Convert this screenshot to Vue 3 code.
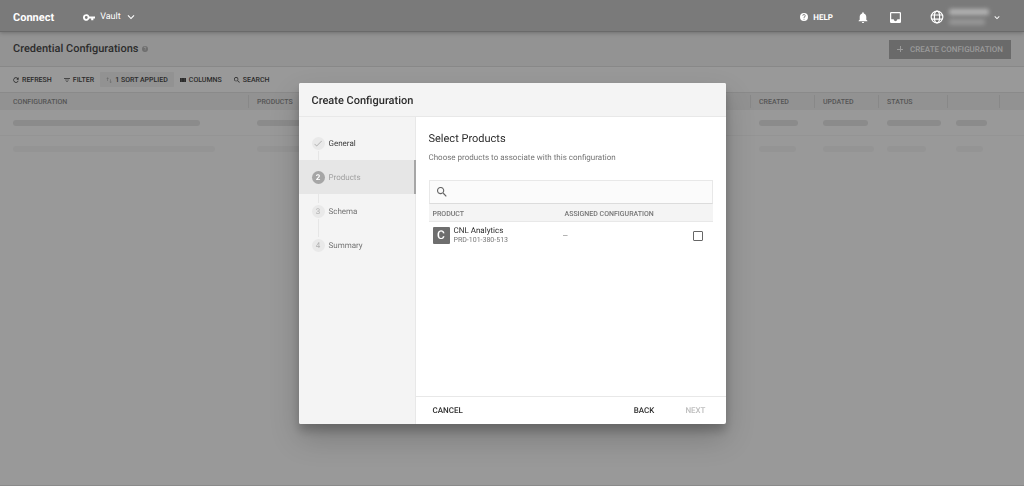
<template>
  <div class="page">
    <header class="topbar">
      <a href="#" class="brand">Connect</a>
      <button class="module">
        <svg class="key" viewBox="1 6 22 12"><path d="M12.65 10A6 6 0 1 0 12.65 14H16v3h4v-3h3v-4H12.65zM7 14.6a2.6 2.6 0 1 1 0-5.2 2.6 2.6 0 0 1 0 5.2z" /></svg>
        <span>Vault</span>
        <svg class="chevron" viewBox="5 7 14 10"><path d="M7.4 8.6 12 13.2l4.6-4.6L18 10l-6 6-6-6z" /></svg>
      </button>
      <nav class="actions">
        <button class="help">
          <svg viewBox="2 2 20 20"><path :d="helpIcon" /></svg>
          <span>HELP</span>
        </button>
        <button class="bell" aria-label="Notifications">
          <svg viewBox="2 2 20 20"><path d="M12 22c1.1 0 2-.9 2-2h-4c0 1.1.9 2 2 2zm6-6v-5c0-3.07-1.63-5.64-4.5-6.32V4a1.5 1.5 0 0 0-3 0v.68C7.64 5.36 6 7.92 6 11v5l-2 2v1h16v-1z" /></svg>
        </button>
        <button class="inbox" aria-label="Inbox">
          <svg viewBox="3 3 18 18"><path d="M19 3H5a2 2 0 0 0-2 2v14a2 2 0 0 0 2 2h14a2 2 0 0 0 2-2V5a2 2 0 0 0-2-2zm0 12h-4a3 3 0 0 1-6 0H5V5h14z" /></svg>
        </button>
        <button class="account" aria-label="Account">
          <svg class="globe" viewBox="0 0 24 24">
            <circle cx="12" cy="12" r="10" />
            <ellipse cx="12" cy="12" rx="4.5" ry="10" />
            <path d="M2.8 8.5h18.4M2.8 15.5h18.4" />
          </svg>
          <span class="user">
            <i class="user-name"></i>
            <i class="user-id"></i>
          </span>
          <svg class="chevron-small" viewBox="5 7 14 10"><path d="M7.4 8.6 12 13.2l4.6-4.6L18 10l-6 6-6-6z" /></svg>
        </button>
      </nav>
    </header>

    <section class="titlebar">
      <h1>Credential Configurations</h1>
      <svg class="hint" viewBox="2 2 20 20"><path :d="helpIcon" /></svg>
      <button class="create"><span class="plus"></span>CREATE CONFIGURATION</button>
    </section>

    <div class="toolbar">
      <button v-for="tool in tools" :key="tool.label" :class="{ applied: tool.applied }">
        <svg viewBox="3 3 18 18"><path :d="tool.icon" /></svg>
        <span>{{ tool.label }}</span>
      </button>
    </div>

    <table class="grid">
      <colgroup>
        <col v-for="col in columns" :key="col.key" :class="'col-' + col.key">
      </colgroup>
      <thead>
        <tr>
          <th v-for="col in columns" :key="col.key"><span>{{ col.label }}</span></th>
        </tr>
      </thead>
      <tbody>
        <tr v-for="(row, i) in placeholders" :key="i" :class="{ faded: i > 0 }">
          <td v-for="(size, j) in row" :key="j">
            <div v-if="size" class="bar" :style="{ width: size + 'px' }"></div>
          </td>
        </tr>
      </tbody>
    </table>

    <div class="overlay">
      <div class="dialog" role="dialog" aria-labelledby="dialog-title">
        <div class="dialog-head">
          <h2 id="dialog-title">Create Configuration</h2>
        </div>
        <div class="dialog-body">
          <ol class="steps">
            <li v-for="(step, i) in steps" :key="step" :class="{ done: i + 1 < current, active: i + 1 === current }">
              <span class="bullet">
                <svg v-if="i + 1 < current" viewBox="3 4 18 16"><path d="M9 16.6 4.8 12.4l-1.2 1.2L9 19 21 7l-1.2-1.2z" /></svg>
                <template v-else>{{ i + 1 }}</template>
              </span>
              <span>{{ step }}</span>
            </li>
          </ol>
          <div class="main">
            <div class="content">
              <h3>Select Products</h3>
              <p>Choose products to associate with this configuration</p>
              <label class="search">
                <svg viewBox="3 3 18 18"><path :d="searchIcon" /></svg>
                <input v-model="query" type="text" aria-label="Search products">
              </label>
              <table class="products">
                <thead>
                  <tr>
                    <th class="name-col">PRODUCT</th>
                    <th>ASSIGNED CONFIGURATION</th>
                    <th class="check-col"></th>
                  </tr>
                </thead>
                <tbody>
                  <tr v-for="product in products" :key="product.id">
                    <td>
                      <div class="product">
                        <span class="avatar">{{ product.name[0] }}</span>
                        <div>
                          <div class="product-name">{{ product.name }}</div>
                          <div class="product-id">{{ product.id }}</div>
                        </div>
                      </div>
                    </td>
                    <td class="assigned">{{ product.assigned }}</td>
                    <td><input v-model="product.selected" type="checkbox" :aria-label="product.name"></td>
                  </tr>
                </tbody>
              </table>
            </div>
            <div class="dialog-foot">
              <button>CANCEL</button>
              <button class="back">BACK</button>
              <button disabled>NEXT</button>
            </div>
          </div>
        </div>
      </div>
    </div>
  </div>
</template>

<script setup>
import { ref } from 'vue';

const helpIcon = 'M12 2a10 10 0 1 0 0 20 10 10 0 0 0 0-20zm1 17h-2v-2h2zm2.07-7.75-.9.92C13.45 12.9 13 13.5 13 15h-2v-.5c0-1.1.45-2.1 1.17-2.83l1.24-1.26A2 2 0 1 0 10 9H8a4 4 0 1 1 7.07 2.25z';
const searchIcon = 'M15.5 14h-.8l-.28-.27a6.5 6.5 0 1 0-.7.7l.28.28v.79l5 4.99L20.49 19zm-6 0a4.5 4.5 0 1 1 0-9 4.5 4.5 0 0 1 0 9z';

const tools = [
  { label: 'REFRESH', icon: 'M17.65 6.35A8 8 0 1 0 19.73 14h-2.4A5.7 5.7 0 1 1 16 7.9L13 11h7V4z' },
  { label: 'FILTER', icon: 'M10 18h4v-2h-4zM3 6v2h18V6zm3 7h12v-2H6z' },
  { label: '1 SORT APPLIED', icon: 'M8 4 4 8h3v7h2V8h3zm8 6v7h-3l4 4 4-4h-3v-7z', applied: true },
  { label: 'COLUMNS', icon: 'M3 6h5.6v12H3zM9 6h6v12H9zM15.4 6H21v12h-5.6z' },
  { label: 'SEARCH', icon: searchIcon }
];

const columns = [
  { key: 'configuration', label: 'CONFIGURATION' },
  { key: 'products', label: 'PRODUCTS' },
  { key: 'created', label: 'CREATED' },
  { key: 'updated', label: 'UPDATED' },
  { key: 'status', label: 'STATUS' },
  { key: 'menu', label: '' },
  { key: 'end', label: '' }
];

const placeholders = [
  [187, 120, 39, 45, 54, 31, 0],
  [202, 140, 37, 51, 39, 27, 0]
];

const steps = ['General', 'Products', 'Schema', 'Summary'];
const current = ref(2);

const query = ref('');
const products = ref([
  { name: 'CNL Analytics', id: 'PRD-101-380-513', assigned: '—', selected: false }
]);
</script>

<style>
body {
  margin: 0;
  background: #999;
}
</style>

<style scoped>
.page {
  min-height: 100vh;
  box-sizing: border-box;
  border-bottom: 1px solid #8a8a8a;
  font-family: Roboto, "Liberation Sans", sans-serif;
  font-size: 8px;
  text-rendering: geometricPrecision;
  color: #2c2c2c;
  background: #999;
}
h1, h2, h3, p, ol {
  margin: 0;
  padding: 0;
}
h1, h2, h3 {
  font-size: 11px;
  font-weight: 500;
  line-height: 14px;
}
button {
  display: flex;
  align-items: center;
  padding: 0;
  border: none;
  background: none;
  color: inherit;
  font-family: inherit;
  font-size: 7px;
  font-weight: 500;
  text-rendering: inherit;
  cursor: pointer;
}
svg {
  display: block;
  flex: none;
  fill: currentColor;
}

.topbar {
  position: relative;
  display: flex;
  align-items: center;
  height: 32px;
  box-sizing: border-box;
  padding: 3px 24px 0 13px;
  background: #7a7a7a;
  border-bottom: 1px solid #6a6a6a;
  box-shadow: 0 1px 4px rgba(0, 0, 0, .25);
  color: #fff;
}
.brand {
  color: #fff;
  font-size: 11px;
  font-weight: 700;
  text-decoration: none;
}
.module {
  margin-left: 29px;
  font-size: 9px;
  font-weight: 400;
}
.key {
  width: 12px;
  height: 7px;
  margin-right: 5px;
}
.chevron {
  width: 8px;
  height: 6px;
  margin-left: 6px;
}
.actions {
  display: flex;
  align-items: center;
  margin-left: auto;
}
.help svg {
  width: 8px;
  height: 8px;
  margin-right: 5px;
}
.help {
  font-size: 8px;
  font-weight: 700;
}
.bell {
  margin-left: 24px;
}
.bell svg {
  width: 12px;
  height: 11px;
}
.inbox {
  margin-left: 21px;
}
.inbox svg {
  width: 11px;
  height: 11px;
}
.account {
  margin-left: 29px;
}
.globe {
  width: 14px;
  height: 14px;
  fill: none;
  stroke: currentColor;
  stroke-width: 2px;
}
.user {
  display: flex;
  flex-direction: column;
  gap: 4px;
  width: 40px;
  margin: 0 5px 0 5px;
}
.user i {
  height: 6px;
  border-radius: 2px;
  background: #b4b4b4;
  filter: blur(2px);
}
.user-id {
  width: 36px;
  opacity: .5;
}
.chevron-small {
  width: 6px;
  height: 5px;
}

.titlebar {
  display: flex;
  align-items: center;
  height: 34px;
  padding: 0 13px;
  background: #939393;
  border-bottom: 1px solid #888;
}
.hint {
  width: 6px;
  height: 6px;
  margin-left: 4px;
  color: #6e6e6e;
}
.create {
  height: 19px;
  margin-left: auto;
  padding: 0 8px;
  background: #6a6a6a;
  color: #9b9b9b;
  font-size: 8px;
}
.plus {
  width: 6px;
  height: 6px;
  margin-right: 7px;
  background: linear-gradient(#9b9b9b, #9b9b9b) center / 6px 1px no-repeat,
              linear-gradient(#9b9b9b, #9b9b9b) center / 1px 6px no-repeat;
}

.toolbar {
  display: flex;
  align-items: center;
  height: 25px;
  padding: 0 7px;
  border-bottom: 1px solid #8a8a8a;
}
.toolbar button {
  height: 15px;
  padding: 0 6px;
}
.toolbar svg {
  width: 6px;
  height: 6px;
  margin-right: 3px;
}
.toolbar .applied {
  background: #929292;
  border-radius: 1px;
}
.applied svg {
  color: #6e6e6e;
}

.grid {
  width: 100%;
  table-layout: fixed;
  border-collapse: collapse;
}
.col-configuration {
  width: 249px;
}
.col-created, .col-updated {
  width: 64px;
}
.col-status {
  width: 69px;
}
.col-menu {
  width: 52px;
}
.col-end {
  width: 24px;
}
.grid th {
  height: 17px;
  padding: 0;
  background: #929292;
  text-align: left;
  font-size: 7px;
  font-weight: 500;
  color: #555;
}
.grid th span {
  display: block;
  height: 13px;
  line-height: 14px;
  padding-left: 8px;
  border-right: 1px solid #888;
}
.grid th:last-child span {
  border: none;
}
.grid td {
  height: 25px;
  padding: 0 0 0 8px;
  border-bottom: 1px solid #949494;
}
.grid td:first-child, .grid th:first-child span {
  padding-left: 13px;
}
.bar {
  height: 6px;
  border-radius: 3px;
  background: #8b8b8b;
}
.faded td {
  border: none;
}
.faded .bar {
  background: #949494;
}

.overlay {
  position: fixed;
  inset: 0;
  display: flex;
  justify-content: center;
  padding: 83px 0 62px;
}
.dialog {
  display: flex;
  flex-direction: column;
  width: 90%;
  max-width: 427px;
  border-radius: 2px;
  background: #fff;
  box-shadow: 0 7px 10px rgba(0, 0, 0, .2), 0 14px 30px rgba(0, 0, 0, .2);
  overflow: hidden;
}
.dialog-head {
  padding: 11px 13px 8px;
  background: #f4f4f4;
  border-bottom: 1px solid #e8e8e8;
}
.dialog-body {
  display: flex;
  flex: 1;
}
.steps {
  width: 116px;
  padding-top: 9px;
  list-style: none;
  background: #f4f4f4;
  border-right: 1px solid #e8e8e8;
}
.steps li {
  position: relative;
  display: flex;
  align-items: center;
  gap: 4px;
  height: 34px;
  padding-left: 13px;
  color: #757575;
}
.steps .done {
  color: #3c3c3c;
}
.steps .active {
  background: #e6e6e6;
  border-right: 2px solid #a6a6a6;
  margin-right: -1px;
  color: #a0a0a0;
}
.bullet {
  display: flex;
  align-items: center;
  justify-content: center;
  width: 13px;
  height: 13px;
  border-radius: 50%;
  background: #e9e9e9;
  color: #b0b0b0;
}
.bullet svg {
  width: 8px;
  height: 7px;
}
.active .bullet {
  background: #a6a6a6;
  color: #fff;
  font-weight: 700;
}
/* connector between two bullets */
.steps li + li::before {
  content: "";
  position: absolute;
  top: -9px;
  left: 19px;
  width: 1px;
  height: 18px;
  background: #e6e6e6;
}
.main {
  display: flex;
  flex: 1;
  flex-direction: column;
}
.content {
  flex: 1;
  padding: 15px 13px 0;
}
.content h3 {
  font-weight: 400;
}
.content p {
  margin: 7px 0 17px;
  line-height: 10px;
  color: #757575;
}
.search {
  display: flex;
  align-items: center;
  height: 22px;
  padding-left: 7px;
  border: 1px solid #e8e8e8;
  border-bottom-color: #dcdcdc;
  background: #fbfbfb;
  color: #666;
}
.search svg {
  width: 10px;
  height: 10px;
}
.search input {
  flex: 1;
  height: 18px;
  padding: 0 7px;
  border: none;
  outline: none;
  background: none;
  font-family: inherit;
  font-size: 8px;
}
.products {
  width: 100%;
  table-layout: fixed;
  border-collapse: collapse;
}
.name-col {
  width: 124px;
}
.check-col {
  width: 16px;
}
.products th {
  height: 15px;
  padding: 2px 4px 0;
  background: #f4f4f4;
  border-bottom: 1px solid #e8e8e8;
  text-align: left;
  font-size: 7px;
  font-weight: 500;
  color: #757575;
}
.products td {
  height: 27px;
  padding: 0 4px;
}
.product {
  display: flex;
  align-items: center;
  gap: 4px;
}
.avatar {
  width: 17px;
  height: 17px;
  border-radius: 1px;
  background: #6e6e6e;
  color: #fff;
  font-size: 12px;
  font-weight: 500;
  line-height: 17px;
  text-align: center;
}
.product-name {
  line-height: 10px;
}
.product-id {
  font-size: 7px;
  line-height: 9px;
  color: #757575;
}
.products .assigned {
  padding-left: 2px;
  font-size: 7px;
  color: #757575;
}
.products input {
  display: block;
  width: 10px;
  height: 10px;
  margin: 0;
  appearance: none;
  border: 1px solid #666;
  border-radius: 1px;
}
.products input:checked {
  background: #757575;
}
.dialog-foot {
  display: flex;
  align-items: center;
  height: 27px;
  padding: 0 20px 0 17px;
  border-top: 1px solid #e8e8e8;
}
.dialog-foot button {
  font-size: 8px;
}
.dialog-foot .back {
  margin: 0 31px 0 auto;
}
.dialog-foot button:disabled {
  color: #bdbdbd;
}
</style>
